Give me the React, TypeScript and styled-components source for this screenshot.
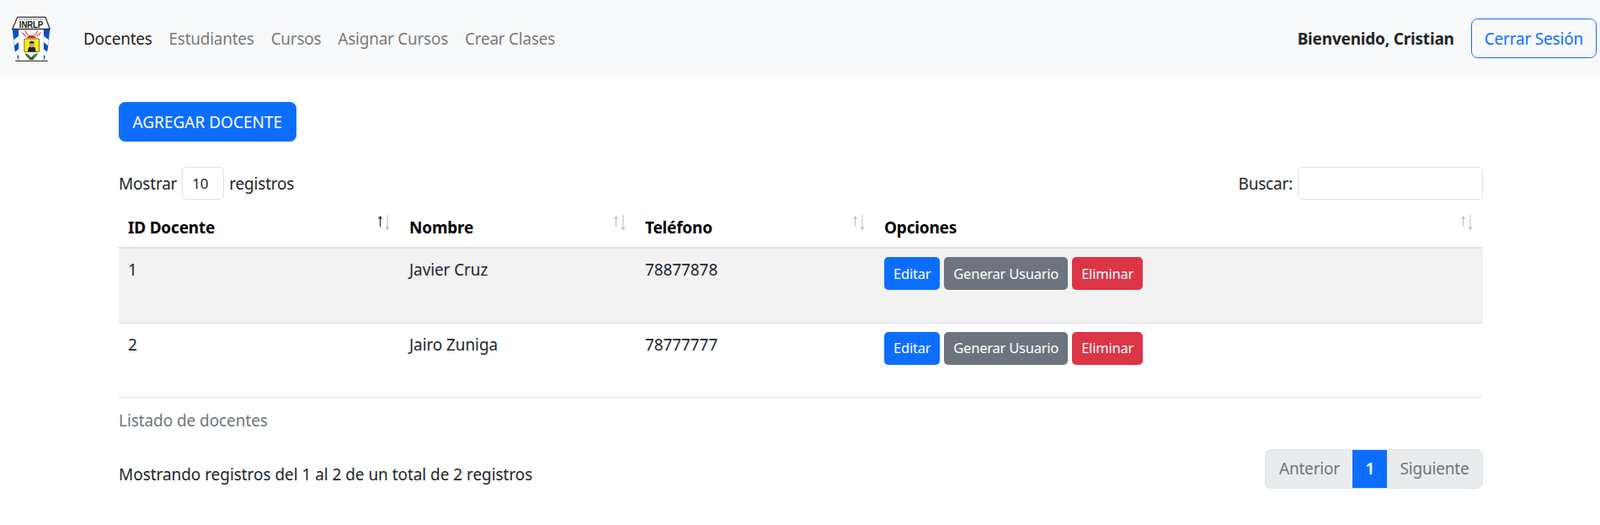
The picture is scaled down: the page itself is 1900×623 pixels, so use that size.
import React from "react";
import styled, {createGlobalStyle} from "styled-components";


const Blue = "#0d6efd";

const GlobalStyle = createGlobalStyle`
	* {
		box-sizing: border-box;
	}
	body {
		margin: 0;
		background: #fff;
		color: #212529;
		font-family: "Noto Sans", "Open Sans", sans-serif;
		font-size: 19px;
		letter-spacing: -0.2px;
		line-height: 30px;
	}
`;

const NavBar = styled.nav`
	height: 91px;
	padding: 0 4px 0 14px;
	background: #f8f9fa;
	display: flex;
	align-items: center;
`;
const Logo = styled.svg`
	width: 46px;
	height: 54px;
	margin-right: 39px;
	flex: none;
`;
const NavLinks = styled.div`
	display: flex;
	gap: 20px;
	flex: 1;
	letter-spacing: -0.26px;
`;
const NavLink = styled.a<{$active?: boolean}>`
	color: ${props => props.$active ? "rgba(0, 0, 0, 0.9)" : "rgba(0, 0, 0, 0.55)"};
`;
const Welcome = styled.strong`
	margin-right: 20px;
	font-weight: 700;
`;
const Button = styled.button`
	height: 47px;
	padding: 0 15.5px;
	border: 1px solid ${Blue};
	border-radius: 7.5px;
	background: ${Blue};
	color: #fff;
	font: inherit;
	letter-spacing: 0;
`;
const OutlineButton = styled(Button)`
	padding: 0 15px;
	background: transparent;
	color: ${Blue};
	letter-spacing: -0.2px;
`;
const Main = styled.main`
	width: 1620px;
	margin-left: 141px;
	padding-top: 30px;
`;
const Controls = styled.div`
	margin-top: 30px;
	height: 39px;
	display: flex;
	align-items: center;
	justify-content: space-between;
`;
const Label = styled.label`
	display: flex;
	align-items: center;
	gap: 6px;
`;
const LengthBox = styled.div`
	width: 50px;
	height: 39px;
	padding-left: 11px;
	border: 1px solid #dee2e6;
	border-radius: 5px;
	font-size: 17px;
	line-height: 37px;
`;
const SearchInput = styled.input`
	width: 220px;
	height: 39px;
	border: 1px solid #dee2e6;
	border-radius: 5px;
	background: #fff;
`;
const Table = styled.table`
	width: 100%;
	margin-top: 8px;
	border-collapse: collapse;
	table-layout: fixed;
`;
const Head = styled.th`
	position: relative;
	height: 49px;
	padding: 10px 11px 0;
	border-bottom: 2px solid #dee2e6;
	color: #000;
	font-weight: 700;
	text-align: left;
	vertical-align: top;
`;
const SortArrows = styled.svg`
	position: absolute;
	top: 9px;
	right: 10px;
	width: 18px;
	height: 20px;
`;
const Row = styled.tr<{$striped?: boolean}>`
	background: ${props => props.$striped ? "#f2f2f2" : "transparent"};
`;
const Cell = styled.td<{$height: number}>`
	height: ${props => props.$height}px;
	padding: 10px 11px 0;
	border-bottom: 1px solid #dee2e6;
	letter-spacing: -0.1px;
	vertical-align: top;
`;
const Actions = styled.div`
	display: flex;
	gap: 5px;
`;
const SmallButton = styled.button<{$color: string}>`
	height: 39px;
	padding: 0 11px;
	border: 0;
	border-radius: 5px;
	background: ${props => props.$color};
	color: #fff;
	font: inherit;
	font-size: 16.5px;
	letter-spacing: -0.22px;
`;
const Caption = styled.div`
	margin-top: 12px;
	color: #6c757d;
	letter-spacing: -0.08px;
`;
const Footer = styled.div`
	margin-top: 19px;
	display: flex;
	align-items: center;
	justify-content: space-between;
`;
const Summary = styled.div`
	padding-top: 13px;
	letter-spacing: -0.05px;
`;
const Pagination = styled.div`
	height: 47px;
	display: flex;
	border-radius: 7.5px;
	overflow: hidden;
	border: 1px solid #dee2e6;
	background: #e9ecef;
	color: #6c757d;
`;
const Page = styled.span<{$active?: boolean}>`
	padding: 0 15.5px;
	line-height: 45px;
	${props => props.$active && `
		padding: 0 15px;
		background: ${Blue};
		color: #fff;
		margin: -1px 0;
		line-height: 47px;
		font-weight: 600;
	`}
`;


function Crest()
{
	return (
		<Logo viewBox="0 0 136 160">
			<path d="M2 46 L20 4 H118 L134 46 L126 158 H12 Z" fill="#fff" />
			<path d="M2 46 L10 120 L24 158 V46 Z" fill="#0d4fc4" />
			<path d="M134 46 L126 120 L112 158 V46 Z" fill="#0d4fc4" />
			<path d="M6 84 L24 70 V92 L9 104 Z M130 84 L112 70 V92 L127 104 Z" fill="#fff" />
			<path d="M12 126 L24 116 V136 L18 142 Z M124 126 L112 116 V136 L118 142 Z" fill="#fff" />
			<path d="M2 46 L20 4 H118 L134 46 Z" fill="#fff" stroke="#333" strokeWidth="4" />
			<path d="M12 158 H126" stroke="#444" strokeWidth="4" />
			<path d="M26 11 H110" stroke="#888" strokeWidth="4" strokeDasharray="5 3" />
			<text x="68" y="42" textAnchor="middle" fontFamily="Liberation Sans" fontSize="30" fontWeight="700" textLength="84" lengthAdjust="spacingAndGlyphs" fill="#111">INRLP</text>
			<path d="M52 78 A18 16 0 0 1 86 78 Z" fill="#d8261c" />
			<path d="M36 58 L50 72 M46 52 L58 68 M92 52 L80 68 M102 58 L88 72" stroke="#d8261c" strokeWidth="3" />
			<path d="M44 80 H96 V126 H44 Z" fill="#fdeb12" stroke="#333" strokeWidth="2" />
			<path d="M56 126 C56 110 62 106 70 106 C80 106 84 112 84 126 Z" fill="#222" />
			<ellipse cx="70" cy="99" rx="9" ry="11" fill="#caa98a" />
			<path d="M61 96 C61 86 80 86 79 96 Z" fill="#222" />
			<path d="M46 130 C56 132 64 138 68 146 C72 138 82 132 92 130 C88 142 80 150 68 152 C56 150 50 142 46 130 Z" fill="#3f7a3c" />
			<path d="M62 146 H76 V154 H62 Z" fill="#444" />
		</Logo>
	);
}

function SortableHead({
	label,
	sorted}: {label: string, sorted?: boolean})
{
		// the up arrow is the shorter one, as in the DataTables sort glyphs
	return (
		<Head>
			{label}
			<SortArrows viewBox="0 0 18 20" fill="none" strokeWidth="1.1">
				<path
					d="M4.5 15 V3.5 M2.5 6 L4.5 3 L6.5 6"
					stroke="#000"
					strokeOpacity={sorted ? 0.85 : 0.25}
				/>
				<path
					d="M13 1 V18 M11 15 L13 18.5 L15 15"
					stroke="#000"
					strokeOpacity={0.25}
				/>
			</SortArrows>
		</Head>
	);
}

function TeacherRow({
	id,
	name,
	phone,
	height,
	striped}: {id: number, name: string, phone: string, height: number, striped?: boolean})
{
	return (
		<Row $striped={striped}>
			<Cell $height={height}>{id}</Cell>
			<Cell $height={height}>{name}</Cell>
			<Cell $height={height}>{phone}</Cell>
			<Cell $height={height}>
				<Actions>
					<SmallButton $color={Blue}>Editar</SmallButton>
					<SmallButton $color="#6c757d">Generar Usuario</SmallButton>
					<SmallButton $color="#dc3545">Eliminar</SmallButton>
				</Actions>
			</Cell>
		</Row>
	);
}

export default function App()
{
	return (
		<>
			<GlobalStyle />
			<NavBar>
				<Crest />
				<NavLinks>
					<NavLink $active>Docentes</NavLink>
					<NavLink>Estudiantes</NavLink>
					<NavLink>Cursos</NavLink>
					<NavLink>Asignar Cursos</NavLink>
					<NavLink>Crear Clases</NavLink>
				</NavLinks>
				<Welcome>Bienvenido, Cristian</Welcome>
				<OutlineButton>Cerrar Sesión</OutlineButton>
			</NavBar>
			<Main>
				<Button>AGREGAR DOCENTE</Button>
				<Controls>
					<Label>
						Mostrar
						<LengthBox>10</LengthBox>
						registros
					</Label>
					<Label>
						Buscar:
						<SearchInput />
					</Label>
				</Controls>
				<Table>
					<colgroup>
						<col style={{width: 334}} />
						<col style={{width: 280}} />
						<col style={{width: 284}} />
						<col />
					</colgroup>
					<thead>
						<tr>
							<SortableHead label="ID Docente" sorted />
							<SortableHead label="Nombre" />
							<SortableHead label="Teléfono" />
							<SortableHead label="Opciones" />
						</tr>
					</thead>
					<tbody>
						<TeacherRow id={1} name="Javier Cruz" phone="78877878" height={89} striped />
						<TeacherRow id={2} name="Jairo Zuniga" phone="78777777" height={88} />
					</tbody>
				</Table>
				<Caption>Listado de docentes</Caption>
				<Footer>
					<Summary>Mostrando registros del 1 al 2 de un total de 2 registros</Summary>
					<Pagination>
						<Page>Anterior</Page>
						<Page $active>1</Page>
						<Page>Siguiente</Page>
					</Pagination>
				</Footer>
			</Main>
		</>
	);
}
